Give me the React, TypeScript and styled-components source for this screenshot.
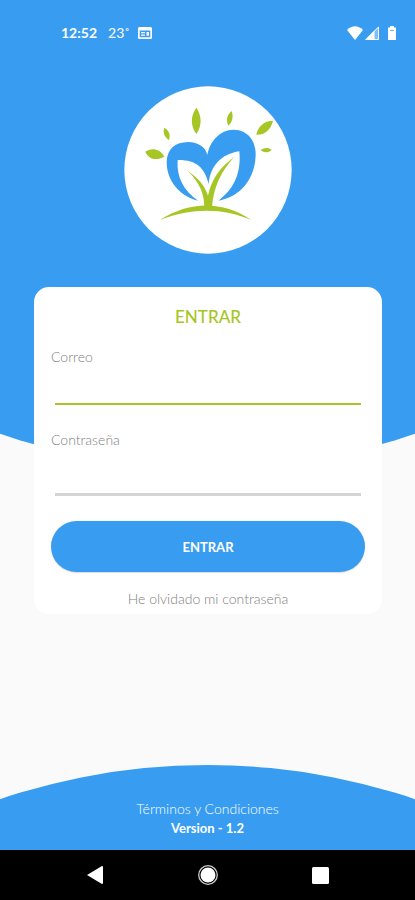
import React from "react";
import styled, { createGlobalStyle } from "styled-components";

const BLUE = "#389df1";
const GREEN = "#a6c626";

const GlobalStyle = createGlobalStyle`
  *, *::before { box-sizing: border-box; }
  body { margin: 0; background: #fafafa; }
  button, input { font: inherit; }
`;

const Page = styled.div`
  position: relative;
  isolation: isolate;
  display: flex;
  flex-direction: column;
  min-height: 100vh;
  overflow: hidden;
  background: #fafafa;
  font-family: Lato, "Open Sans", sans-serif;

  &::before {
    content: "";
    position: absolute;
    z-index: -1;
    inset: 0 0 auto;
    height: 468px;
    background: ${BLUE};
    clip-path: ellipse(156% 647px at 50% calc(100% - 647px));
  }
`;

const StatusBar = styled.header`
  display: flex;
  align-items: center;
  justify-content: space-between;
  height: 66px;
  padding: 0 18px 0 61px;
  color: #fff;
`;

const StatusGroup = styled.div<{ $gap: number }>`
  display: flex;
  align-items: center;
  gap: ${(p) => p.$gap}px;
`;

const Clock = styled.span`
  font-size: 14px;
  font-weight: 700;
  line-height: 20px;
`;

const Degrees = styled.span`
  margin-left: 3px;
  font-size: 14px;
  line-height: 20px;
`;

const Logo = styled.svg`
  display: block;
  width: 168px;
  height: 168px;
  margin: 20px auto 33px;
`;

const Card = styled.form`
  display: flex;
  flex-direction: column;
  margin: 0 33px 0 34px;
  padding: 18px 17px 5px;
  border-radius: 15px;
  background: #fff;
`;

const Title = styled.h1`
  margin: 0 0 18px;
  color: ${GREEN};
  font-size: 17px;
  font-weight: 500;
  line-height: 24px;
  text-align: center;
`;

const Field = styled.div`
  display: flex;
  flex-direction: column;
  margin-bottom: 25px;
`;

const Label = styled.label`
  color: #808080;
  font-size: 14px;
  font-weight: 300;
  line-height: 20px;
`;

const Input = styled.input<{ $password?: boolean }>`
  height: ${(p) => (p.$password ? 46 : 38)}px;
  min-width: 0;
  margin: 0 4px;
  padding: 4px 0;
  border: 0;
  border-bottom: ${(p) => (p.$password ? "3px solid #d4d4d4" : `2px solid ${GREEN}`)};
  border-radius: 0;
  background: transparent;
  outline: none;
  color: #444;
  font-size: 14px;
`;

const Submit = styled.button`
  height: 51px;
  border: 0;
  border-radius: 26px;
  background: ${BLUE};
  box-shadow: 0 1px 1px rgba(0, 0, 0, 0.15);
  color: #fff;
  font-size: 13px;
  font-weight: 700;
  cursor: pointer;
`;

const TextLink = styled.a<{ $color: string }>`
  align-self: center;
  color: ${(p) => p.$color};
  font-size: 14px;
  font-weight: 300;
  line-height: 20px;
  text-decoration: none;
`;

const Forgot = styled(TextLink)`
  margin-top: 17px;
`;

const Footer = styled.footer`
  display: flex;
  flex-direction: column;
  align-items: center;
  height: 85px;
  margin-top: auto;
  padding-top: 34px;
  background: ${BLUE};
  color: #fff;
  clip-path: ellipse(156% 647px at 50% 647px);
`;

const Version = styled.p`
  margin: 0;
  font-size: 13px;
  font-weight: 700;
  line-height: 18px;
`;

const NavBar = styled.nav`
  display: flex;
  align-items: center;
  justify-content: space-around;
  height: 50px;
  padding: 0 38px;
  background: #000;
`;

const NavButton = styled.button`
  display: grid;
  place-items: center;
  width: 48px;
  height: 50px;
  padding: 0;
  border: 0;
  background: none;
  cursor: pointer;
`;

const HeartLogo = () => (
  <Logo viewBox="18 18 504 504" role="img" aria-label="Logo">
    <circle cx="270" cy="270" r="251" fill="#fff" />
    <path
      fill={BLUE}
      d="M240 362C184 348 146 302 146 246C147 205 173 187 210 186C242 187 263 202 268 225C275 185 305 149 347 149C390 150 414 182 413 226C411 295 369 351 301 362C342 332 371 286 364 214C310 222 277 257 272 312C260 263 235 239 179 240C175 291 197 333 240 362Z"
    />
    <g fill={GREEN}>
      <path d="M259 383C259 340 243 306 210 274C241 294 259 316 270 347C279 300 306 261 349 231C310 272 286 322 282 383Z" />
      <path d="M126 420C217 363 312 362 400 420C312 384 225 383 126 420Z" />
      <path d="M235 83C252 108 252 137 235 162C217 137 217 108 235 83Z" />
      <path d="M341 93C347 111 343 126 331 137C323 120 327 104 341 93Z" />
      <path d="M139 143C153 151 158 164 153 180C139 171 134 158 139 143Z" />
      <path d="M82 215C98 202 127 205 139 230C117 242 92 240 82 215Z" />
      <path d="M465 122C458 151 439 165 415 164C419 140 439 122 465 122Z" />
      <path d="M428 211C439 202 451 202 461 210C450 219 438 219 428 211Z" />
    </g>
  </Logo>
);

export default function App() {
  return (
    <>
      <GlobalStyle />
      <Page>
        <StatusBar>
          <StatusGroup $gap={8}>
            <Clock>12:52</Clock>
            <Degrees>23˚</Degrees>
            <svg width="14" height="12" viewBox="0 0 14 12" aria-hidden="true">
              <path
                fill="#fff"
                fillRule="evenodd"
                d="M1.5 0h11A1.5 1.5 0 0 1 14 1.5v9a1.5 1.5 0 0 1-1.5 1.5h-11A1.5 1.5 0 0 1 0 10.5v-9A1.5 1.5 0 0 1 1.5 0ZM1.7 3.5v6.8h10.6V3.5ZM3 5h4v1.2H3ZM3 7.5h4v1.2H3ZM8.5 5H11v3.7H8.5Z"
              />
            </svg>
          </StatusGroup>
          <StatusGroup $gap={2}>
            <svg width="16" height="14" viewBox="0 0 16 14" aria-hidden="true">
              <path fill="#fff" d="M0 4Q8-3.5 16 4L8 14Z" />
            </svg>
            <svg width="14" height="14" viewBox="0 0 14 14" aria-hidden="true">
              <path fill="#fff" fillOpacity="0.35" d="M14 0v14H0Z" />
              <path fill="#fff" d="M9.5 4.5V14H0Z" />
              <path fill="none" stroke="#fff" d="M13.5 1v12.5H1Z" />
            </svg>
            <svg width="16" height="14" viewBox="0 0 16 14" aria-hidden="true">
              <path fill="#fff" d="M9 0h4v1.5h2V14H7V1.5h2Z" />
              <path stroke={BLUE} strokeOpacity="0.7" d="M9 4.5h4" />
            </svg>
          </StatusGroup>
        </StatusBar>

        <HeartLogo />

        <Card onSubmit={(e) => e.preventDefault()}>
          <Title>ENTRAR</Title>
          <Field>
            <Label htmlFor="email">Correo</Label>
            <Input id="email" type="email" />
          </Field>
          <Field>
            <Label htmlFor="password">Contraseña</Label>
            <Input id="password" type="password" $password />
          </Field>
          <Submit type="submit">ENTRAR</Submit>
          <Forgot href="#forgot" $color="#808080">
            He olvidado mi contraseña
          </Forgot>
        </Card>

        <Footer>
          <TextLink href="#terms" $color="#fff">
            Términos y Condiciones
          </TextLink>
          <Version>Version - 1.2</Version>
        </Footer>

        <NavBar>
          <NavButton type="button" aria-label="Back">
            <svg width="16" height="18" viewBox="0 0 16 18">
              <path fill="#fff" d="M15 0Q16 0 16 1V17Q16 18 15 18L0 9Z" />
            </svg>
          </NavButton>
          <NavButton type="button" aria-label="Home">
            <svg width="20" height="20" viewBox="0 0 20 20">
              <circle cx="10" cy="10" r="9.3" fill="none" stroke="#ccc" strokeWidth="1.3" />
              <circle cx="10" cy="10" r="7.5" fill="#fff" />
            </svg>
          </NavButton>
          <NavButton type="button" aria-label="Recent apps">
            <svg width="17" height="17" viewBox="0 0 17 17">
              <rect width="17" height="17" rx="1.5" fill="#fff" />
            </svg>
          </NavButton>
        </NavBar>
      </Page>
    </>
  );
}
